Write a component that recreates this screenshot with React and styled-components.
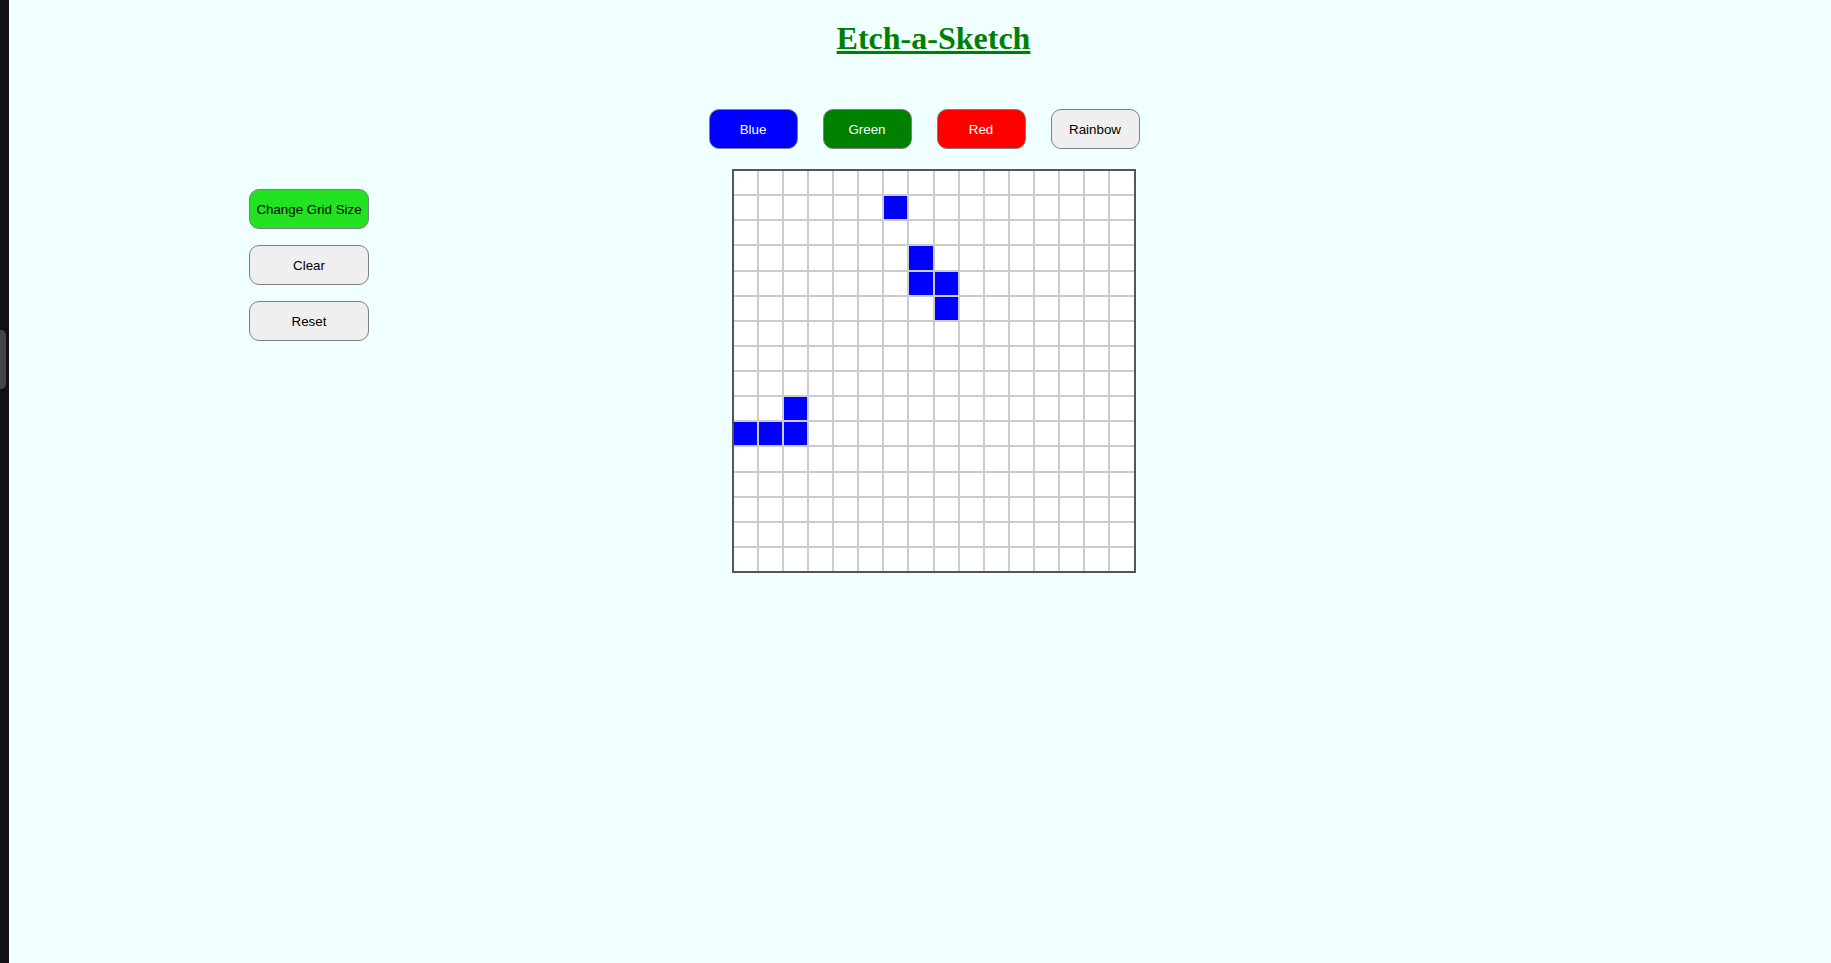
import React from 'react';
import styled, { createGlobalStyle } from 'styled-components';

const GlobalStyle = createGlobalStyle`
  html, body {
    margin: 0;
    padding: 0;
    background-color: #f0ffff;
  }
`;

const Shell = styled.div`
  display: flex;
  min-height: 100vh;
`;

const EdgeStrip = styled.div`
  position: relative;
  width: 9px;
  flex-shrink: 0;
  background-color: #111;
`;

const EdgeTab = styled.div`
  position: absolute;
  left: 0;
  top: 330px;
  width: 6px;
  height: 59px;
  background-color: #444;
  border-radius: 0 5px 5px 0;
`;

const Page = styled.div`
  flex: 1;
  padding-left: 27px;
  background-color: #f0ffff;
`;

const Title = styled.h1`
  margin: 20px 0 0;
  font-family: "Liberation Serif", "Times New Roman", serif;
  font-size: 32px;
  line-height: 36px;
  font-weight: bold;
  color: green;
  text-decoration: underline;
  text-align: center;
`;

const ColorBar = styled.div`
  display: flex;
  justify-content: center;
  gap: 25px;
  margin-top: 53px;
  padding-right: 19px;
`;

const Button = styled.button`
  width: ${(p) => p.$w || 89}px;
  height: 40px;
  padding: 0;
  border: 1px solid #808080;
  border-radius: 10px;
  background-color: ${(p) => p.$bg || '#efefef'};
  color: ${(p) => p.$fg || '#000'};
  font-family: "Liberation Sans", Arial, sans-serif;
  font-size: 13.33px;
  cursor: pointer;
`;

const Board = styled.div`
  display: grid;
  grid-template-columns: 1fr auto 1fr;
  margin-top: 20px;
`;

const Sidebar = styled.div`
  display: flex;
  flex-direction: column;
  gap: 16px;
  align-items: flex-start;
  margin: 20px 0 0 213px;
`;

const Grid = styled.div`
  display: grid;
  grid-template-columns: repeat(16, 1fr);
  grid-template-rows: repeat(16, 1fr);
  gap: 2px;
  width: 400px;
  height: 400px;
  border: 2px solid #555;
  background-color: #ccc;
`;

const Cell = styled.div`
  background-color: ${(p) => (p.$on ? '#0000ff' : '#fff')};
`;

const painted = new Set(['1-6', '3-7', '4-7', '4-8', '5-8', '9-2', '10-0', '10-1', '10-2']);

const colors = [
  { label: 'Blue', bg: '#0000ff', fg: '#fff' },
  { label: 'Green', bg: '#008000', fg: '#fff' },
  { label: 'Red', bg: '#ff0000', fg: '#fff' },
  { label: 'Rainbow', bg: '#efefef', fg: '#000' },
];

export default function App() {
  const cells = [];
  for (let r = 0; r < 16; r++) {
    for (let c = 0; c < 16; c++) {
      cells.push(<Cell key={r + '-' + c} $on={painted.has(r + '-' + c)} />);
    }
  }

  return (
    <>
      <GlobalStyle />
      <Shell>
        <EdgeStrip>
          <EdgeTab />
        </EdgeStrip>
        <Page>
          <Title>Etch-a-Sketch</Title>
          <ColorBar>
            {colors.map((c) => (
              <Button key={c.label} $bg={c.bg} $fg={c.fg}>
                {c.label}
              </Button>
            ))}
          </ColorBar>
          <Board>
            <Sidebar>
              <Button $w={120} $bg="#22e222">Change Grid Size</Button>
              <Button $w={120}>Clear</Button>
              <Button $w={120}>Reset</Button>
            </Sidebar>
            <Grid>{cells}</Grid>
            <div />
          </Board>
        </Page>
      </Shell>
    </>
  );
}
